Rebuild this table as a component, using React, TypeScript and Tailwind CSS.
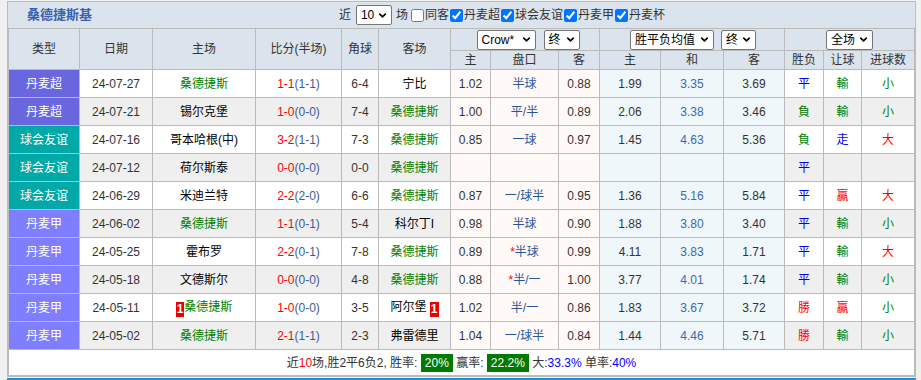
import React from "react";
import { ChevronDown } from "lucide-react";

type Row = {
  league: string;
  date: string;
  home: string;
  homeOurs?: boolean;
  homeCard?: boolean;
  score: string;
  half: string;
  corner: string;
  away: string;
  awayOurs?: boolean;
  awayCard?: boolean;
  o1?: string;
  hc?: string;
  hcStar?: boolean;
  o2?: string;
  e1?: string;
  e2?: string;
  e3?: string;
  wl: string;
  ah?: string;
  ou?: string;
};

const rows: Row[] = [
  { league: "丹麦超", date: "24-07-27", home: "桑德捷斯", homeOurs: true, score: "1-1", half: "(1-1)", corner: "6-4", away: "宁比", o1: "1.02", hc: "半球", o2: "0.88", e1: "1.99", e2: "3.35", e3: "3.69", wl: "平", ah: "輸", ou: "小" },
  { league: "丹麦超", date: "24-07-21", home: "锡尔克堡", score: "1-0", half: "(0-0)", corner: "7-4", away: "桑德捷斯", awayOurs: true, o1: "1.00", hc: "平/半", o2: "0.89", e1: "2.06", e2: "3.38", e3: "3.46", wl: "負", ah: "輸", ou: "小" },
  { league: "球会友谊", date: "24-07-16", home: "哥本哈根(中)", score: "3-2", half: "(1-1)", corner: "7-3", away: "桑德捷斯", awayOurs: true, o1: "0.85", hc: "一球", o2: "0.97", e1: "1.45", e2: "4.63", e3: "5.36", wl: "負", ah: "走", ou: "大" },
  { league: "球会友谊", date: "24-07-12", home: "荷尔斯泰", score: "0-0", half: "(0-0)", corner: "0-0", away: "桑德捷斯", awayOurs: true, wl: "平" },
  { league: "球会友谊", date: "24-06-29", home: "米迪兰特", score: "2-2", half: "(2-0)", corner: "6-6", away: "桑德捷斯", awayOurs: true, o1: "0.87", hc: "一/球半", o2: "0.95", e1: "1.36", e2: "5.16", e3: "5.84", wl: "平", ah: "贏", ou: "大" },
  { league: "丹麦甲", date: "24-06-02", home: "桑德捷斯", homeOurs: true, score: "1-1", half: "(0-1)", corner: "5-4", away: "科尔丁I", o1: "0.98", hc: "半球", o2: "0.90", e1: "1.88", e2: "3.80", e3: "3.40", wl: "平", ah: "輸", ou: "小" },
  { league: "丹麦甲", date: "24-05-25", home: "霍布罗", score: "2-2", half: "(0-1)", corner: "7-8", away: "桑德捷斯", awayOurs: true, o1: "0.89", hc: "半球", hcStar: true, o2: "0.99", e1: "4.11", e2: "3.83", e3: "1.71", wl: "平", ah: "輸", ou: "大" },
  { league: "丹麦甲", date: "24-05-18", home: "文德斯尔", score: "0-0", half: "(0-0)", corner: "4-8", away: "桑德捷斯", awayOurs: true, o1: "0.88", hc: "半/一", hcStar: true, o2: "1.00", e1: "3.77", e2: "4.01", e3: "1.74", wl: "平", ah: "輸", ou: "小" },
  { league: "丹麦甲", date: "24-05-11", home: "桑德捷斯", homeOurs: true, homeCard: true, score: "1-0", half: "(0-0)", corner: "3-5", away: "阿尔堡", awayCard: true, o1: "1.02", hc: "半/一", o2: "0.86", e1: "1.83", e2: "3.67", e3: "3.72", wl: "勝", ah: "贏", ou: "小" },
  { league: "丹麦甲", date: "24-05-02", home: "桑德捷斯", homeOurs: true, score: "2-1", half: "(1-1)", corner: "2-3", away: "弗雷德里", o1: "1.04", hc: "一/球半", o2: "0.84", e1: "1.44", e2: "4.46", e3: "5.71", wl: "勝", ah: "輸", ou: "小" },
];

const leagueBg: Record<string, string> = {
  丹麦超: "bg-[#6a66e0]",
  球会友谊: "bg-[#00a8a8]",
  丹麦甲: "bg-[#7e7eff]",
};

const resultColor: Record<string, string> = {
  平: "text-[#0000ff]",
  負: "text-[#008000]",
  勝: "text-[#ff0000]",
  輸: "text-[#008000]",
  走: "text-[#0000ff]",
  贏: "text-[#ff0000]",
  小: "text-[#008000]",
  大: "text-[#ff0000]",
};

const Card = () => (
  <span className="inline-block bg-[#ee0000] text-white font-bold text-[12px] leading-[15px] px-[1px] align-[-2px]">1</span>
);

// native-looking select box with a bold chevron
const Select = ({ value, w }: { value: string; w: string }) => (
  <span
    className={`${w} h-[20px] inline-flex items-center justify-between border border-[#767676] rounded-[2px] bg-white text-[12px] text-black font-normal pl-[4px] pr-[3px]`}
  >
    <span className="whitespace-nowrap">{value}</span>
    <ChevronDown className="w-[11px] h-[11px] shrink-0" strokeWidth={3.5} />
  </span>
);

const Check = ({ label, on }: { label: string; on?: boolean }) => (
  <label className="inline-flex items-center">
    <input type="checkbox" defaultChecked={on} className="w-[13px] h-[13px] m-0 mx-[1px]" />
    <span>{label}</span>
  </label>
);

const th = "border border-[#bbbbbb] font-normal text-[#333] text-[12px]";
const td = "border border-[#bbbbbb] text-center h-[28px] p-0";

export default function App() {
  return (
    <div
      className="w-[921px] h-[380px] overflow-hidden bg-[#f0f0f0] pl-[7px] pr-[5px] pt-[1px]"
      style={{ fontFamily: "'Liberation Sans', 'Noto Sans CJK SC', sans-serif" }}
    >
      <div className="border border-[#bbbbbb] bg-[#dbe3ed]">
        <div className="h-[26px] flex items-center justify-between pl-[19px] pr-[250px]">
          <span className="text-[13px] font-bold text-[#3a62b0]">桑德捷斯基</span>
          <div className="flex items-center text-[12px] text-[#333]">
            <span className="mr-[5px]">近</span>
            <Select value="10" w="w-[36px]" />
            <span className="ml-[4px] mr-[2px]">场</span>
            <Check label="同客" />
            <Check label="丹麦超" on />
            <Check label="球会友谊" on />
            <Check label="丹麦甲" on />
            <Check label="丹麦杯" on />
          </div>
        </div>
        <table className="w-full table-fixed border-collapse text-[12px]">
          <colgroup>
            <col className="w-[71px]" />
            <col className="w-[73px]" />
            <col className="w-[103px]" />
            <col className="w-[86px]" />
            <col className="w-[37px]" />
            <col className="w-[72px]" />
            <col className="w-[40px]" />
            <col className="w-[68px]" />
            <col className="w-[41px]" />
            <col className="w-[61px]" />
            <col className="w-[63px]" />
            <col className="w-[61px]" />
            <col className="w-[39px]" />
            <col className="w-[38px]" />
            <col />
          </colgroup>
          <thead>
            <tr className="h-[22px]">
              <th rowSpan={2} className={th}>类型</th>
              <th rowSpan={2} className={th}>日期</th>
              <th rowSpan={2} className={th}>主场</th>
              <th rowSpan={2} className={th}>比分(半场)</th>
              <th rowSpan={2} className={th}>角球</th>
              <th rowSpan={2} className={th}>客场</th>
              <th colSpan={3} className={th}>
                <div className="flex items-center justify-center gap-[8px] pl-[6px]">
                  <Select value="Crow*" w="w-[59px]" />
                  <Select value="终" w="w-[36px]" />
                </div>
              </th>
              <th colSpan={3} className={th}>
                <div className="flex items-center justify-center gap-[7px] pl-[2px]">
                  <Select value="胜平负均值" w="w-[84px]" />
                  <Select value="终" w="w-[35px]" />
                </div>
              </th>
              <th colSpan={3} className={th}>
                <div className="flex items-center justify-center">
                  <Select value="全场" w="w-[47px]" />
                </div>
              </th>
            </tr>
            <tr className="h-[19px]">
              {["主", "盘口", "客", "主", "和", "客", "胜负", "让球", "进球数"].map((h, i) => (
                <th key={i} className={th}>{h}</th>
              ))}
            </tr>
          </thead>
          <tbody>
            {rows.map((r, i) => {
              const bg = i % 2 === 0 ? "bg-white" : "bg-[#efefef]";
              const odd1 = "bg-[#fffaf7]";
              const odd2 = "bg-[#f0f7fb]";
              return (
                <tr key={i}>
                  <td className={`${td} ${leagueBg[r.league]} text-white`}>{r.league}</td>
                  <td className={`${td} ${bg} text-[#333]`}>{r.date}</td>
                  <td className={`${td} ${bg} ${r.homeOurs ? "text-[#008000]" : "text-black"}`}>
                    {r.homeCard && <Card />}
                    {r.home}
                  </td>
                  <td className={`${td} ${bg}`}>
                    <span className="text-[#ff0000]">{r.score}</span>
                    <span className="text-[#3b5c99]">{r.half}</span>
                  </td>
                  <td className={`${td} ${bg} text-[#333]`}>{r.corner}</td>
                  <td className={`${td} ${bg} ${r.awayOurs ? "text-[#008000]" : "text-black"}`}>
                    {r.away}
                    {r.awayCard && (
                      <>
                        {" "}
                        <Card />
                      </>
                    )}
                  </td>
                  <td className={`${td} ${odd1} text-[#333]`}>{r.o1}</td>
                  <td className={`${td} ${odd1} text-[#2a5599]`}>
                    {r.hcStar && <span className="text-[#ff0000]">*</span>}
                    {r.hc}
                  </td>
                  <td className={`${td} ${odd1} text-[#333]`}>{r.o2}</td>
                  <td className={`${td} ${odd2} text-[#333]`}>{r.e1}</td>
                  <td className={`${td} ${odd2} text-[#3d68b0]`}>{r.e2}</td>
                  <td className={`${td} ${odd2} text-[#333]`}>{r.e3}</td>
                  <td className={`${td} ${bg} ${resultColor[r.wl]}`}>{r.wl}</td>
                  <td className={`${td} ${bg} ${r.ah ? resultColor[r.ah] : ""}`}>{r.ah}</td>
                  <td className={`${td} ${bg} ${r.ou ? resultColor[r.ou] : ""}`}>{r.ou}</td>
                </tr>
              );
            })}
            <tr>
              <td colSpan={15} className="border border-[#bbbbbb] bg-white h-[26px] p-0 text-center text-[12px] text-[#333]">
                近<span className="text-[#ff0000]">10</span>场,胜2平6负2, 胜率:{" "}
                <span className="inline-block bg-[#007a00] text-white px-[4px] leading-[18px]">20%</span>{" "}
                赢率:{" "}
                <span className="inline-block bg-[#007a00] text-white px-[4px] leading-[18px]">22.2%</span>{" "}
                大:<span className="text-[#0000ff]">33.3%</span> 单率:<span className="text-[#0000ff]">40%</span>
              </td>
            </tr>
          </tbody>
        </table>
      </div>
      <div className="h-[10px] bg-[#1e8fd6] mt-[1px]" />
    </div>
  );
}
